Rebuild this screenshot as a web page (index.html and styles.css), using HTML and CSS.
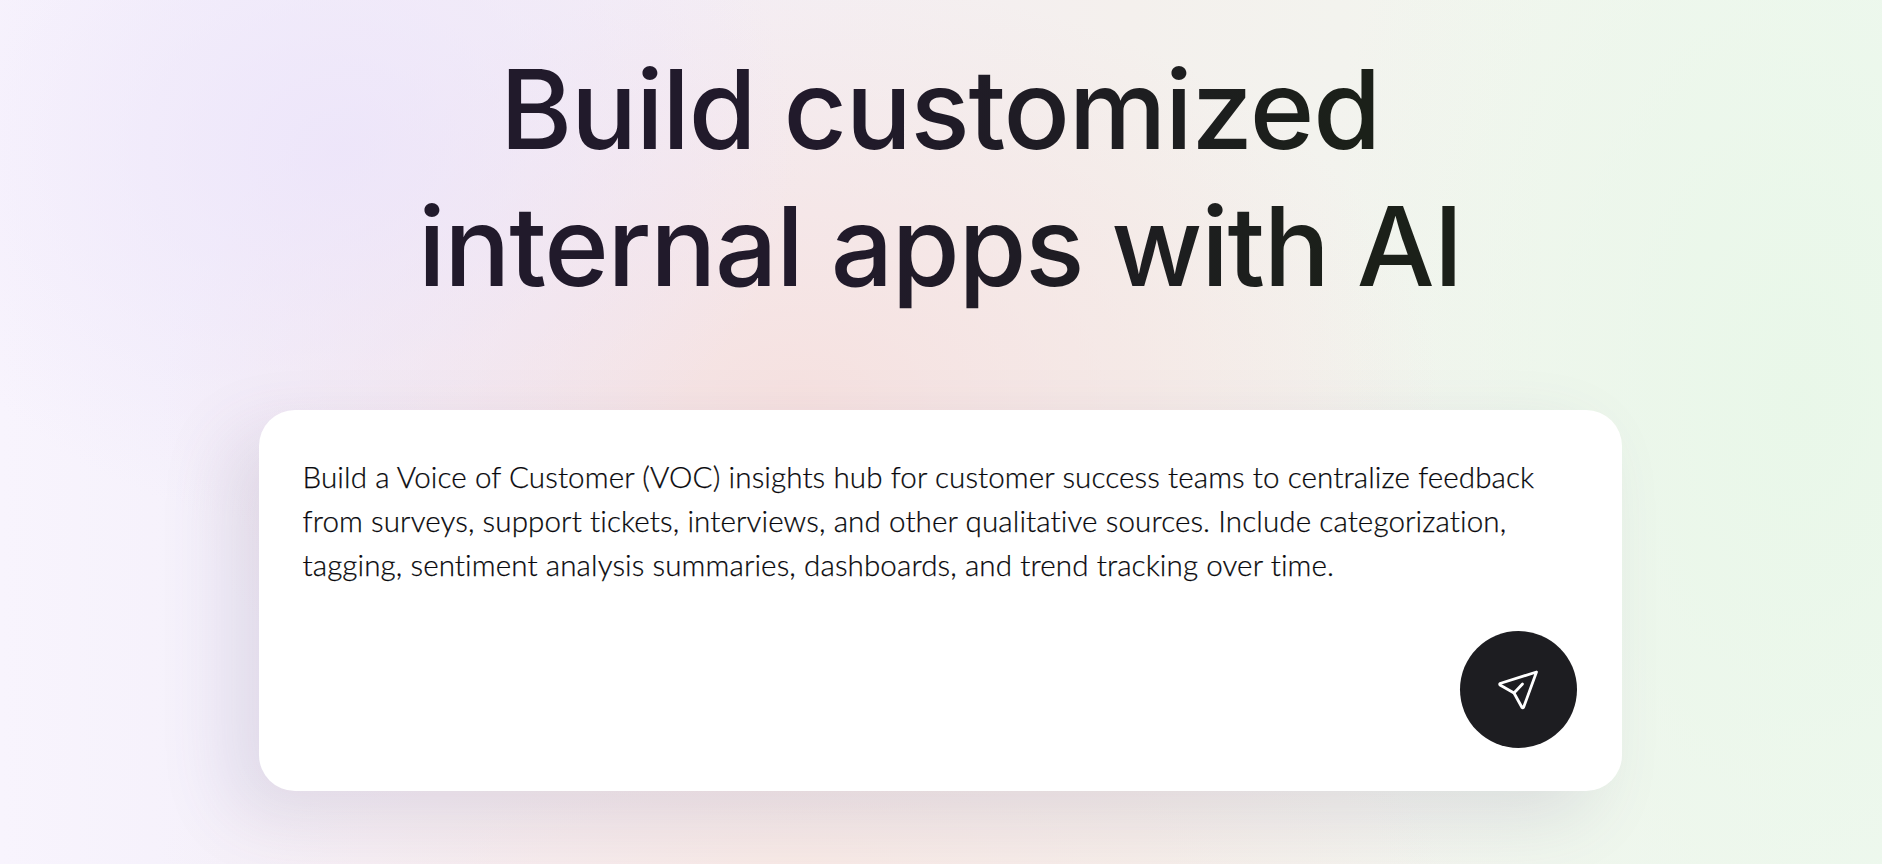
FILE: index.html
```html
<!DOCTYPE html>
<html lang="en">
<head>
<meta charset="utf-8">
<title>Build customized internal apps with AI</title>
<link rel="stylesheet" href="styles.css">
</head>
<body>
<main class="hero">
  <h1 class="title">Build customized<br>internal apps with AI</h1>
  <form class="prompt">
    <p class="prompt-text">Build a Voice of Customer (VOC) insights hub for customer success teams to centralize feedback<br>from surveys, support tickets, interviews, and other qualitative sources. Include categorization,<br>tagging, sentiment analysis summaries, dashboards, and trend tracking over time.</p>
    <button class="send" type="button" aria-label="Send">
      <svg class="send-icon" viewBox="0 0 42 42" fill="none" stroke="#fff" stroke-width="2.8" stroke-linecap="round" stroke-linejoin="round">
        <path d="M39.5 3 L3 14.5 a1 1 0 0 0 0 1.5 L17 24 L25 38.5 a1 1 0 0 0 1.6 -0.2 Z"/>
        <path d="M17 24 L25.5 15"/>
      </svg>
    </button>
  </form>
</main>
</body>
</html>
```
FILE: styles.css
```css
* { box-sizing: border-box; }
html, body { margin: 0; height: 100%; }
body {
  width: 100%;
  height: 864px;
  overflow: hidden;
  font-family: "Lato", "Liberation Sans", sans-serif;
  background-color: #f6f5f5;
  background-image:
    radial-gradient(ellipse 460px 380px at 340px 150px, rgba(236,228,250,.85), rgba(236,228,250,0)),
    radial-gradient(ellipse 640px 420px at 800px 400px, rgba(246,224,222,.9), rgba(246,224,222,0)),
    radial-gradient(ellipse 640px 200px at 800px 864px, rgba(248,232,226,.8), rgba(248,232,226,0)),
    radial-gradient(ellipse 500px 800px at 1800px 400px, rgba(232,247,232,.9), rgba(232,247,232,0)),
    linear-gradient(90deg, #f8f4fd 0%, #f5f1fb 12%, #f4edf5 35%, #f4f0ed 60%, #f2f6ef 82%, #f0f8f0 100%);
}
.hero {
  display: flex;
  flex-direction: column;
  align-items: center;
  height: 100%;
  padding-right: 2px;
}
.title {
  margin: 41px 0 0;
  font-family: "Inter", sans-serif;
  font-size: 110px;
  line-height: 137px;
  font-weight: 470;
  letter-spacing: -1.3px;
  text-align: center;
  color: transparent;
  background: linear-gradient(90deg, #211a2b 40%, #1b2019 90%);
  -webkit-background-clip: text;
  background-clip: text;
}
.prompt {
  position: relative;
  width: 1363px;
  height: 381px;
  margin-top: 95px;
  padding: 45px 44px;
  background: #fff;
  border-radius: 36px;
  box-shadow: -30px 24px 70px rgba(90,80,130,.14);
}
.prompt-text {
  margin: 0;
  font-size: 29.6px;
  line-height: 44px;
  font-weight: 300;
  letter-spacing: .1px;
  color: #08080c;
  -webkit-text-stroke: .25px #08080c;
}
.send {
  position: absolute;
  right: 45px;
  bottom: 43px;
  width: 117px;
  height: 117px;
  border: 0;
  border-radius: 50%;
  background: #1d1d21;
  display: flex;
  align-items: center;
  justify-content: center;
  padding: 0;
}
.send-icon { width: 42px; height: 42px; }
```
